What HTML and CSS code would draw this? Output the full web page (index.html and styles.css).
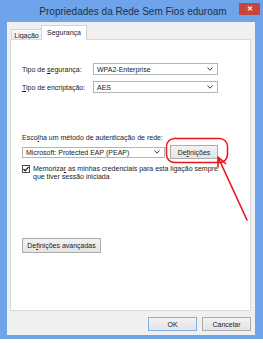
FILE: index.html
```html
<!DOCTYPE html>
<html lang="pt">
  <head>
    <meta charset="UTF-8" />
    <title>Propriedades da Rede Sem Fios eduroam</title>
    <link rel="stylesheet" href="styles.css">
  </head>
  <body>
    <div class="window">
      <div class="titlebar">
        <span class="title">Propriedades da Rede Sem Fios eduroam</span>
        <span class="close">✕</span>
      </div>
      <div class="client">
        <div class="tabs">
          <div class="tab">Ligação</div>
          <div class="tab active">Segurança</div>
        </div>
        <div class="panel">
          <div class="field first">
            <label>Tipo de <u>s</u>egurança:</label>
            <div class="select wide">
              <span>WPA2-Enterprise</span>
              <svg width="6" height="4" viewBox="0 0 6 4"><path d="M0.5 0.5 L3 3.2 L5.5 0.5" fill="none" stroke="#444" stroke-width="1"/></svg>
            </div>
          </div>
          <div class="field">
            <label><u>T</u>ipo de encriptação:</label>
            <div class="select wide">
              <span>AES</span>
              <svg width="6" height="4" viewBox="0 0 6 4"><path d="M0.5 0.5 L3 3.2 L5.5 0.5" fill="none" stroke="#444" stroke-width="1"/></svg>
            </div>
          </div>

          <div class="method_label">Esco<u>l</u>ha um método de autenticação de rede:</div>
          <div class="method_row">
            <div class="select method">
              <span>Microsoft: Protected EAP (PEAP)</span>
              <svg width="6" height="4" viewBox="0 0 6 4"><path d="M0.5 0.5 L3 3.2 L5.5 0.5" fill="none" stroke="#444" stroke-width="1"/></svg>
            </div>
            <button class="btn settings">De<u>f</u>inições</button>
          </div>

          <div class="check_row">
            <span class="checkbox">
              <svg width="8" height="8" viewBox="0 0 8 8"><path d="M1.5 4 L3.2 5.8 L6.6 1.8" fill="none" stroke="#222" stroke-width="1.3"/></svg>
            </span>
            <span class="check_text">Memoriza<u>r</u> as minhas credenciais para esta ligação sempre<br>que tiver sessão iniciada</span>
          </div>

          <button class="btn advanced">De<u>f</u>inições avançadas</button>
        </div>
        <div class="actions">
          <button class="btn default">OK</button>
          <button class="btn">Cancelar</button>
        </div>
      </div>

      <!-- red annotation drawn over the dialog -->
      <svg class="markup" width="263" height="343" viewBox="0 0 263 343">
        <rect x="166.5" y="138.5" width="61" height="24" rx="8" fill="none" stroke="#e8141b" stroke-width="1.5"/>
        <path d="M218 157 L247 220 M218 157 L218 167 M218 157 L225.6 163.5" fill="none" stroke="#e8141b" stroke-width="1.6" stroke-linecap="round"/>
      </svg>
    </div>
  </body>
</html>
```

FILE: styles.css
```css
body {
  margin: 0;
  background-color: #ffffff;
  font-family: "Liberation Sans", Arial, sans-serif;
}

.window {
  position: relative;
  width: 263px;
  height: 339px;
  padding: 0 8px 4px 7px;
  box-sizing: border-box;
  background-color: #6fa3ea;
  display: flex;
  flex-direction: column;
}

.titlebar {
  height: 22px;
  display: flex;
  align-items: center;
  padding-left: 20px;
  margin-right: -5px;
}

.title {
  flex: 1;
  text-align: center;
  font-size: 10px;
  color: #1d3149;
}

.close {
  width: 21px;
  height: 12px;
  margin-top: -4px;
  background-color: #c8453d;
  color: #ffffff;
  font-size: 7px;
  font-weight: bold;
  display: flex;
  align-items: center;
  justify-content: center;
}

.client {
  flex: 1;
  background-color: #f0f0f0;
  padding: 3px 4px 4px 3px;
  display: flex;
  flex-direction: column;
  font-size: 7px;
  color: #1a1a1a;
}

.tabs {
  display: flex;
  align-items: flex-end;
  padding-left: 1px;
  margin-bottom: -1px;
}

.tab {
  height: 11px;
  padding: 0 2px;
  width: 31px;
  box-sizing: border-box;
  border: 1px solid #d4d4d4;
  border-bottom: none;
  background: linear-gradient(#fbfbfb, #ececec);
  display: flex;
  align-items: center;
  justify-content: center;
}

.tab.active {
  position: relative;
  z-index: 1;
  width: 46px;
  height: 15px;
  margin-left: -1px;
  background: #ffffff;
  padding-bottom: 2px;
}

.panel {
  height: 272px;
  box-sizing: border-box;
  border: 1px solid #d9d9d9;
  background-color: #ffffff;
  padding: 0 0 0 11px;
  display: flex;
  flex-direction: column;
  align-items: flex-start;
}

.field {
  display: flex;
  align-items: center;
  height: 12px;
  margin-top: 6px;
}

.field.first {
  margin-top: 23px;
}

.field label {
  width: 71px;
}

.select {
  height: 12px;
  box-sizing: border-box;
  border: 1px solid #b4b4b4;
  background-color: #ffffff;
  padding: 0 4px 0 3px;
  display: flex;
  align-items: center;
  justify-content: space-between;
}

.wide {
  width: 125px;
}

.method_label {
  margin-top: 41px;
  line-height: 8px;
}

.method_row {
  margin-top: 3px;
  height: 14px;
  display: flex;
  align-items: center;
}

.select.method {
  width: 143px;
  height: 11px;
}

.btn {
  height: 14px;
  box-sizing: border-box;
  border: 1px solid #acacac;
  background: linear-gradient(#f2f2f2, #e4e4e4);
  font-family: "Liberation Sans", Arial, sans-serif;
  font-size: 7px;
  color: #1a1a1a;
  padding: 0;
}

.settings {
  width: 48px;
  margin-left: 5px;
}

.check_row {
  margin-top: 6px;
  display: flex;
  align-items: flex-start;
  line-height: 8px;
}

.checkbox {
  width: 8px;
  height: 8px;
  box-sizing: border-box;
  border: 1px solid #4a4a4a;
  background-color: #ffffff;
  margin-right: 3px;
  display: flex;
}

.checkbox svg {
  margin: -1px;
}

.advanced {
  margin-top: 57px;
  width: 79px;
  height: 15px;
}

.actions {
  margin-top: 6px;
  display: flex;
  justify-content: flex-end;
  gap: 5px;
}

.actions .btn {
  width: 49px;
}

.btn.default {
  border-color: #7fb1e3;
}

.markup {
  position: absolute;
  left: 0;
  top: 0;
  pointer-events: none;
}
```
